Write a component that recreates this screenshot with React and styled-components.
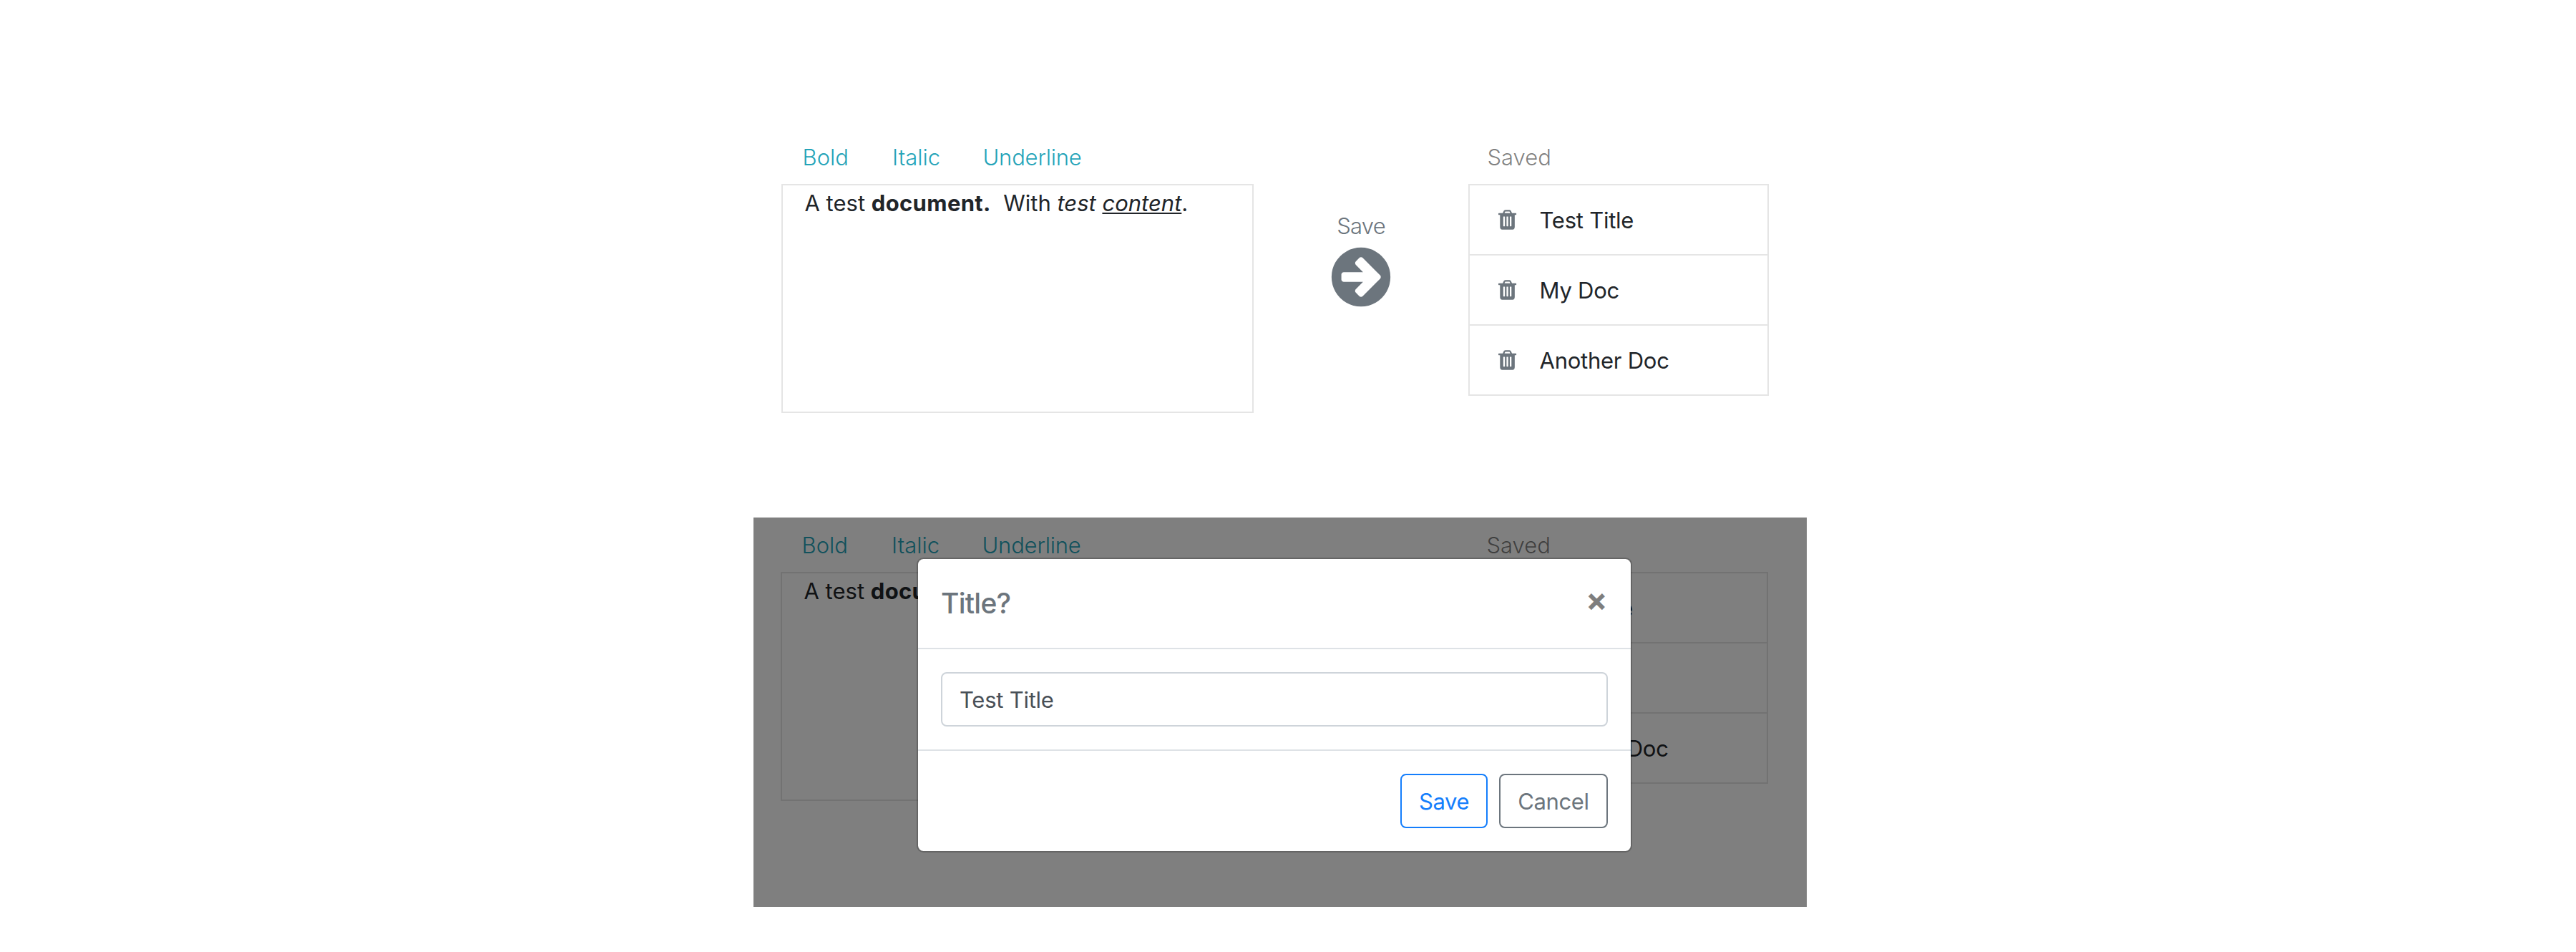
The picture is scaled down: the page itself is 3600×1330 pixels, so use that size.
import React from "react";
import styled, { createGlobalStyle } from "styled-components";

const GlobalStyle = createGlobalStyle`
  *, *::before, *::after { box-sizing: border-box; }
  body {
    margin: 0;
    background: #fff;
    color: #212529;
    font-family: Inter, "Liberation Sans", sans-serif;
    font-size: 31px;
    line-height: 48px;
    letter-spacing: -0.25px;
  }
`;

const Page = styled.main`
  display: flex;
  flex-direction: column;
  width: 3600px;
  height: 1330px;
  padding: 181px 0 0 1053px;
  overflow: hidden;
`;

const Screen = styled.section`
  position: relative;
  display: grid;
  grid-template-columns: 660px 300px 420px;
  align-items: start;
  align-content: start;
  width: 1472px;
  height: ${(p) => p.$height}px;
  margin-left: ${(p) => p.$shift || 0}px;
  padding-left: 38px;
`;

const Column = styled.div`
  display: flex;
  flex-direction: column;
`;

const Toolbar = styled.nav`
  display: grid;
  grid-template-columns: 125.5px 126.5px auto;
  justify-content: start;
  align-items: start;
  height: 76px;
  padding: 15px 0 0 29.5px;
`;

const ToolbarButton = styled.button`
  padding: 0;
  border: 0;
  background: none;
  color: #24a3b8;
  font: inherit;
  font-weight: 300;
  letter-spacing: ${(p) => p.$spacing || 0}px;
  text-align: left;
`;

const Editor = styled.div`
  height: 320px;
  padding: 1px 30.5px 0;
  border: 2px solid rgba(0, 0, 0, 0.1);
  letter-spacing: 0;
  white-space: pre-wrap;

  strong {
    font-weight: 700;
    letter-spacing: 0.35px;
  }

  u {
    text-decoration-thickness: 2px;
    text-underline-offset: 2px;
    text-decoration-skip-ink: none;
  }
`;

const SaveAction = styled.button`
  display: flex;
  flex-direction: column;
  align-items: center;
  padding: 111px 0 0;
  border: 0;
  background: none;
  color: #6c757d;
  font: inherit;
  font-weight: 300;
  letter-spacing: -0.75px;

  svg {
    margin-top: -1px;
  }
`;

const ListHeading = styled.div`
  height: 76px;
  padding: 15px 0 0 26.5px;
  color: rgba(0, 0, 0, 0.5);
  font-weight: 300;
  letter-spacing: 0;
`;

const DocList = styled.ul`
  margin: 0;
  padding: 0;
  list-style: none;
`;

const DocItem = styled.li`
  display: flex;
  align-items: center;
  gap: 28.5px;
  height: 100px;
  padding-left: 37px;
  border: 2px solid rgba(0, 0, 0, 0.1);

  & + & {
    height: 98px;
    border-top: 0;
  }

  svg {
    flex: none;
    fill: #6c757d;
  }
`;

const DocName = styled.span`
  padding-top: 2px;
`;

const Backdrop = styled.div`
  position: absolute;
  inset: 0;
  padding: 56px 0 0 228px;
  background: rgba(0, 0, 0, 0.5);
`;

const Dialog = styled.div`
  display: flex;
  flex-direction: column;
  width: 1000px;
  border: 2px solid rgba(0, 0, 0, 0.2);
  border-radius: 9.6px;
  background: #fff;
  background-clip: padding-box;
`;

const DialogHeader = styled.header`
  display: flex;
  align-items: flex-start;
  justify-content: space-between;
  padding: 32px;
  border-bottom: 2px solid #dee2e6;
`;

const DialogTitle = styled.h5`
  margin: 0;
  color: #6c757d;
  font-size: 39px;
  font-weight: 500;
  line-height: 60px;
  letter-spacing: -0.75px;
`;

const CloseButton = styled.button`
  padding: 0 0.5px 0 0;
  border: 0;
  background: none;
  color: #000;
  font: inherit;
  font-size: 45px;
  font-weight: 700;
  line-height: 49px;
  opacity: 0.5;
`;

const DialogBody = styled.div`
  display: flex;
  padding: 32px;
`;

const TitleInput = styled.input`
  width: 100%;
  height: 76px;
  padding: 0 24px;
  border: 2px solid #ced4da;
  border-radius: 8px;
  outline: none;
  background: #fff;
  color: #495057;
  font: inherit;
  letter-spacing: inherit;
`;

const DialogFooter = styled.footer`
  display: flex;
  justify-content: flex-end;
  gap: 16px;
  padding: 32px;
  border-top: 2px solid #dee2e6;
`;

const OutlineButton = styled.button`
  width: ${(p) => p.$width}px;
  height: 76px;
  padding: 2px 0 0;
  border: 2px solid ${(p) => p.$color};
  border-radius: 8px;
  background: transparent;
  color: ${(p) => p.$color};
  font: inherit;
  letter-spacing: -0.4px;
`;

function ArrowCircle() {
  return (
    <svg width="96" height="96" viewBox="0 0 1792 1792" fill="#6c757d">
      <path d="M1413 896q0-27-18-45l-91-91-362-362q-18-18-45-18t-45 18l-91 91q-18 18-18 45t18 45l189 189h-502q-26 0-45 19t-19 45v128q0 26 19 45t45 19h502l-189 189q-19 19-19 45t19 45l91 91q18 18 45 18t45-18l362-362 91-91q18-18 18-45zm251 0q0 209-103 385.500t-279.500 279.500-385.500 103-385.500-103-279.500-279.500-103-385.500 103-385.500 279.500-279.500 385.500-103 385.500 103 279.500 279.500 103 385.500z" />
    </svg>
  );
}

function Trash() {
  return (
    <svg width="32" height="32" viewBox="24 0 1792 1792">
      <path d="M704 1376v-704q0-14-9-23t-23-9h-64q-14 0-23 9t-9 23v704q0 14 9 23t23 9h64q14 0 23-9t9-23zm256 0v-704q0-14-9-23t-23-9h-64q-14 0-23 9t-9 23v704q0 14 9 23t23 9h64q14 0 23-9t9-23zm256 0v-704q0-14-9-23t-23-9h-64q-14 0-23 9t-9 23v704q0 14 9 23t23 9h64q14 0 23-9t9-23zm-544-992h448l-48-117q-7-9-17-11h-317q-10 2-17 11zm928 32v64q0 14-9 23t-23 9h-96v948q0 83-47 143.500t-113 60.500h-832q-66 0-113-58.500t-47-141.500v-952h-96q-14 0-23-9t-9-23v-64q0-14 9-23t23-9h309l70-167q15-37 54-63t79-26h320q40 0 79 26t54 63l70 167h309q14 0 23 9t9 23z" />
    </svg>
  );
}

const DOCS = ["Test Title", "My Doc", "Another Doc"];

function Workspace({ height, shift, children }) {
  return (
    <Screen $height={height} $shift={shift}>
      <Column>
        <Toolbar>
          <ToolbarButton>Bold</ToolbarButton>
          <ToolbarButton>Italic</ToolbarButton>
          <ToolbarButton $spacing={-0.2}>Underline</ToolbarButton>
        </Toolbar>
        <Editor>
          A test <strong>document.</strong>
          {"\u00a0 With "}
          <em>
            test <u>content</u>
          </em>
          .
        </Editor>
      </Column>
      <SaveAction>
        Save
        <ArrowCircle />
      </SaveAction>
      <Column>
        <ListHeading>Saved</ListHeading>
        <DocList>
          {DOCS.map((name) => (
            <DocItem key={name}>
              <Trash />
              <DocName>{name}</DocName>
            </DocItem>
          ))}
        </DocList>
      </Column>
      {children}
    </Screen>
  );
}

export default function App() {
  return (
    <>
      <GlobalStyle />
      <Page>
        <Workspace height={542} shift={1} />
        <Workspace height={544}>
          <Backdrop>
            <Dialog role="dialog">
              <DialogHeader>
                <DialogTitle>Title?</DialogTitle>
                <CloseButton aria-label="Close">×</CloseButton>
              </DialogHeader>
              <DialogBody>
                <TitleInput defaultValue="Test Title" />
              </DialogBody>
              <DialogFooter>
                <OutlineButton $color="#147efc" $width={122}>Save</OutlineButton>
                <OutlineButton $color="#6c757d" $width={152}>Cancel</OutlineButton>
              </DialogFooter>
            </Dialog>
          </Backdrop>
        </Workspace>
      </Page>
    </>
  );
}
